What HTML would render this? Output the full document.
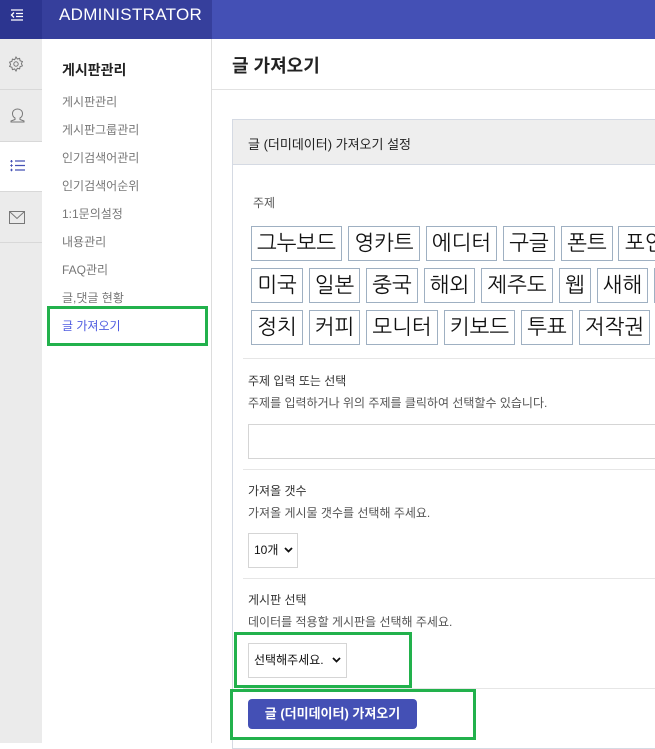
<!DOCTYPE html>
<html><head><meta charset="utf-8"><style>
*{margin:0;padding:0;box-sizing:border-box}
body{width:655px;height:743px;overflow:hidden;position:relative;background:#fff;font-family:"Liberation Sans","Noto Sans CJK KR",sans-serif;color:#333}
.a{position:absolute}
.t{position:absolute;white-space:nowrap}
.tag{position:absolute;height:35px;border:1px solid #9fb0c2;font-size:21px;line-height:33px;text-align:center;color:#111;background:#fff;font-family:"NanumGothic","Noto Sans CJK KR",sans-serif;white-space:nowrap;overflow:hidden}
.hl{position:absolute;height:1px;background:#e6e6e6}
.g{position:absolute;border:3px solid #22b14c}
</style></head><body>
<div class="a" style="left:0;top:0;width:42px;height:39px;background:#2c3590"></div>
<div class="a" style="left:42px;top:0;width:170px;height:39px;background:#363f9c"></div>
<div class="a" style="left:212px;top:0;width:443px;height:39px;background:#4450b5"></div>
<div class="t" style="left:59px;top:5px;font-size:17px;color:#fff;letter-spacing:0.3px">ADMINISTRATOR</div>
<svg class="a" style="left:10px;top:8px" width="14" height="14" viewBox="0 0 14 14"><path d="M1 2h12M6 5.5h7M6 8.5h7M1 12h12M4 4.5L1.5 7 4 9.5" stroke="#fff" stroke-width="1.3" fill="none"/></svg>
<div class="a" style="left:0;top:39px;width:42px;height:704px;background:#ebebeb"></div>
<div class="a" style="left:0;top:141px;width:42px;height:50px;background:#fff"></div>
<div class="hl" style="left:0;top:89px;width:42px;background:#d8d8d8"></div>
<div class="hl" style="left:0;top:141px;width:42px;background:#d8d8d8"></div>
<div class="hl" style="left:0;top:191px;width:42px;background:#d8d8d8"></div>
<div class="hl" style="left:0;top:242px;width:42px;background:#d8d8d8"></div>
<svg class="a" style="left:8px;top:56px" width="16" height="16" viewBox="0 0 16 16"><circle cx="8" cy="8" r="2.2" fill="none" stroke="#777" stroke-width="1"/><path d="M8 1l1.3 2 2.3-.6.5 2.3 2.3.8-1 2.2 1 2.1-2.3.8-.5 2.3-2.3-.6L8 15l-1.3-2-2.3.6-.5-2.3-2.3-.8 1-2.1-1-2.2 2.3-.8.5-2.3 2.3.6z" fill="none" stroke="#777" stroke-width="1"/></svg>
<svg class="a" style="left:10px;top:108px" width="15" height="15" viewBox="0 0 15 15"><path d="M5 10c-2-1-2.5-3-2.5-4.5C2.5 3 4.5 1 7.5 1s5 2 5 4.5c0 1.5-.5 3.5-2.5 4.5v1.5l4 1.5v1H1v-1l4-1.5z" fill="none" stroke="#777" stroke-width="1"/></svg>
<svg class="a" style="left:10px;top:159px" width="15" height="13" viewBox="0 0 15 13"><path d="M5 2h10M5 6.5h10M5 11h10" stroke="#4450b5" stroke-width="1.3"/><path d="M1.5 1v2.5M0.3 2.2h2.4M1.5 5.3v2.5M0.3 6.5h2.4M1.5 9.8v2.5M0.3 11h2.4" stroke="#4450b5" stroke-width="1"/></svg>
<svg class="a" style="left:9px;top:211px" width="16" height="13" viewBox="0 0 16 13"><path d="M.5 .5h15v12H.5zM.5 .5l7.5 7 7.5-7" fill="none" stroke="#777" stroke-width="1"/></svg>
<div class="a" style="left:211px;top:39px;width:1px;height:704px;background:#ddd"></div>
<div class="t" style="left:62px;top:60px;font-size:14px;font-weight:bold;color:#222">게시판관리</div>
<div class="t" style="left:62px;top:88px;font-size:12px;color:#777;line-height:28px">게시판관리<br>게시판그룹관리<br>인기검색어관리<br>인기검색어순위<br>1:1문의설정<br>내용관리<br>FAQ관리<br>글,댓글 현황<br><span style="color:#4f5ce0">글 가져오기</span></div>
<div class="g" style="left:47px;top:306px;width:161px;height:40px"></div>
<div class="t" style="left:232px;top:52px;font-size:18px;font-weight:bold;color:#222">글 가져오기</div>
<div class="hl" style="left:212px;top:89px;width:443px;background:#e2e2e2"></div>
<div class="a" style="left:232px;top:119px;width:430px;height:630px;border:1px solid #d5dae3;border-right:none"></div>
<div class="a" style="left:233px;top:120px;width:422px;height:45px;background:#eee;border-bottom:1px solid #d5dae3"></div>
<div class="t" style="left:248px;top:134px;font-size:13px;color:#222">글 (더미데이터) 가져오기 설정</div>
<div class="t" style="left:253px;top:194px;font-size:12px;color:#555">주제</div>
<div class="tag" style="left:251px;top:226px;width:91px">그누보드</div>
<div class="tag" style="left:348px;top:226px;width:72px">영카트</div>
<div class="tag" style="left:426px;top:226px;width:71px">에디터</div>
<div class="tag" style="left:503px;top:226px;width:52px">구글</div>
<div class="tag" style="left:561px;top:226px;width:52px">폰트</div>
<div class="tag" style="left:618px;top:226px;width:80px;text-align:left;padding-left:6px">포인트</div>
<div class="tag" style="left:251px;top:268px;width:52px">미국</div>
<div class="tag" style="left:309px;top:268px;width:51px">일본</div>
<div class="tag" style="left:366px;top:268px;width:52px">중국</div>
<div class="tag" style="left:424px;top:268px;width:51px">해외</div>
<div class="tag" style="left:481px;top:268px;width:72px">제주도</div>
<div class="tag" style="left:559px;top:268px;width:32px">웹</div>
<div class="tag" style="left:597px;top:268px;width:51px">새해</div>
<div class="tag" style="left:654px;top:268px;width:40px"></div>
<div class="tag" style="left:251px;top:310px;width:52px">정치</div>
<div class="tag" style="left:309px;top:310px;width:51px">커피</div>
<div class="tag" style="left:366px;top:310px;width:72px">모니터</div>
<div class="tag" style="left:444px;top:310px;width:71px">키보드</div>
<div class="tag" style="left:521px;top:310px;width:52px">투표</div>
<div class="tag" style="left:579px;top:310px;width:71px">저작권</div>
<div class="hl" style="left:243px;top:358px;width:412px"></div>
<div class="t" style="left:248px;top:372px;font-size:12px;color:#333">주제 입력 또는 선택</div>
<div class="t" style="left:248px;top:394px;font-size:12px;color:#555">주제를 입력하거나 위의 주제를 클릭하여 선택할수 있습니다.</div>
<div class="a" style="left:248px;top:424px;width:420px;height:35px;border:1px solid #d5d5d5"></div>
<div class="hl" style="left:243px;top:469px;width:412px"></div>
<div class="t" style="left:248px;top:482px;font-size:12px;color:#333">가져올 갯수</div>
<div class="t" style="left:248px;top:504px;font-size:12px;color:#555">가져올 게시물 갯수를 선택해 주세요.</div>
<div class="a" style="left:248px;top:533px;width:50px;height:35px;border:1px solid #d5d5d5;font-size:12px;line-height:33px;padding-left:5px;color:#111">10개</div>
<svg class="a" style="left:284px;top:547px" width="9" height="6" viewBox="0 0 9 6"><path d="M1 1l3.5 3.5L8 1" stroke="#111" stroke-width="1.8" fill="none"/></svg>
<div class="hl" style="left:243px;top:578px;width:412px"></div>
<div class="t" style="left:248px;top:591px;font-size:12px;color:#333">게시판 선택</div>
<div class="t" style="left:248px;top:613px;font-size:12px;color:#555">데이터를 적용할 게시판을 선택해 주세요.</div>
<div class="a" style="left:248px;top:643px;width:99px;height:35px;border:1px solid #d5d5d5;font-size:12px;line-height:33px;padding-left:5px;color:#111">선택해주세요.</div>
<svg class="a" style="left:332px;top:657px" width="9" height="6" viewBox="0 0 9 6"><path d="M1 1l3.5 3.5L8 1" stroke="#111" stroke-width="1.8" fill="none"/></svg>
<div class="g" style="left:234px;top:632px;width:178px;height:56px"></div>
<div class="hl" style="left:243px;top:688px;width:412px"></div>
<div class="a" style="left:248px;top:699px;width:169px;height:30px;background:#4450b5;border-radius:4px;color:#fff;font-size:13px;font-weight:bold;line-height:30px;text-align:center">글 (더미데이터) 가져오기</div>
<div class="g" style="left:230px;top:689px;width:246px;height:51px"></div>
</body></html>
